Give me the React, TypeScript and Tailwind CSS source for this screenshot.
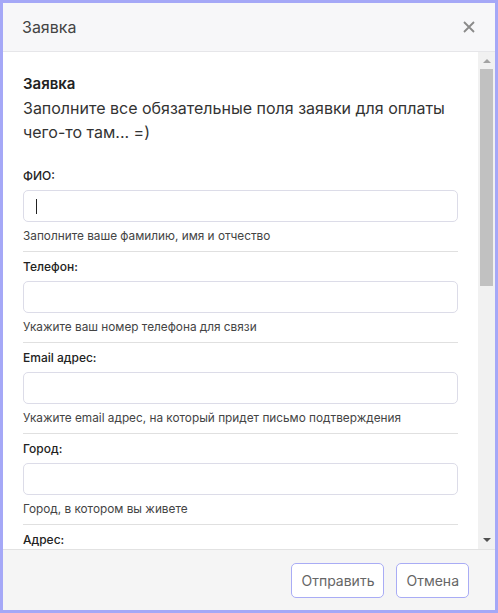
const fields = [
  { label: "ФИО:", hint: "Заполните ваше фамилию, имя и отчество", focused: true },
  { label: "Телефон:", hint: "Укажите ваш номер телефона для связи" },
  { label: "Email адрес:", hint: "Укажите email адрес, на который придет письмо подтверждения" },
  { label: "Город:", hint: "Город, в котором вы живете" },
  { label: "Адрес:" },
];

const Field = ({ label, hint, focused }: { label: string; hint?: string; focused?: boolean }) => (
  <div>
    <div className="text-[12px] leading-[16px] font-medium text-[#222]">{label}</div>
    <div className="mt-[6px] h-[32px] rounded-[5px] border border-[#dcdce8] bg-white flex items-center px-[12px]">
      {focused && <span className="w-px h-[15px] bg-[#222]" />}
    </div>
    {hint && <div className="mt-[6px] text-[11.8px] leading-[16px] text-[#444]">{hint}</div>}
    <div className="mt-[7px] mb-[7px] h-px bg-[#e0e0e0]" />
  </div>
);

const Scrollbar = () => (
  <div className="w-[17px] shrink-0 bg-[#f1f1f1] flex flex-col items-center">
    <div className="h-[17px] w-full flex items-center justify-center">
      <svg width="8" height="5" viewBox="0 0 8 5">
        <path d="M0 5 L4 1 L8 5 Z" fill="#a3a3a3" />
      </svg>
    </div>
    <div className="w-[13px] h-[217px] bg-[#c1c1c1]" />
    <div className="flex-1" />
    <div className="h-[17px] w-full flex items-center justify-center">
      <svg width="8" height="5" viewBox="0 0 8 5">
        <path d="M0 0 L8 0 L4 4 Z" fill="#505050" />
      </svg>
    </div>
  </div>
);

export default function App() {
  return (
    <div className="w-[498px] h-[613px] border-[3px] border-[#a5a8f7] bg-white flex flex-col font-['Inter',sans-serif] overflow-hidden">
      <div className="h-[49px] shrink-0 bg-[#f7f7f9] border-b border-[#e6e6e9] flex items-center justify-between pl-[19px] pr-[20px]">
        <span className="text-[16px] text-[#444]">Заявка</span>
        <svg width="12" height="12" viewBox="0 0 12 12" stroke="#8a8a8a" strokeWidth="1.8">
          <path d="M1 1 L11 11 M11 1 L1 11" />
        </svg>
      </div>

      <div className="flex-1 flex min-h-0">
        <div className="flex-1 overflow-hidden px-[20px] pt-[20px]">
          <div className="text-[15px] leading-[24px] font-semibold text-[#222]">Заявка</div>
          <p className="text-[16px] leading-[24px] text-[#333]">
            Заполните все обязательные поля заявки для оплаты чего-то там... =)
          </p>
          <div className="mt-[24px]">
            {fields.map((f) => (
              <Field key={f.label} {...f} />
            ))}
          </div>
        </div>
        <Scrollbar />
      </div>

      <div className="h-[61px] shrink-0 bg-[#f5f5f5] border-t border-[#e2e2e2] flex items-center justify-end gap-[12px] pr-[26px]">
        <button className="h-[35px] px-[9px] rounded-[5px] border border-[#a9acf5] bg-white text-[14px] text-[#666]">
          Отправить
        </button>
        <button className="h-[35px] px-[9px] rounded-[5px] border border-[#a9acf5] bg-white text-[14px] text-[#666]">
          Отмена
        </button>
      </div>
    </div>
  );
}
